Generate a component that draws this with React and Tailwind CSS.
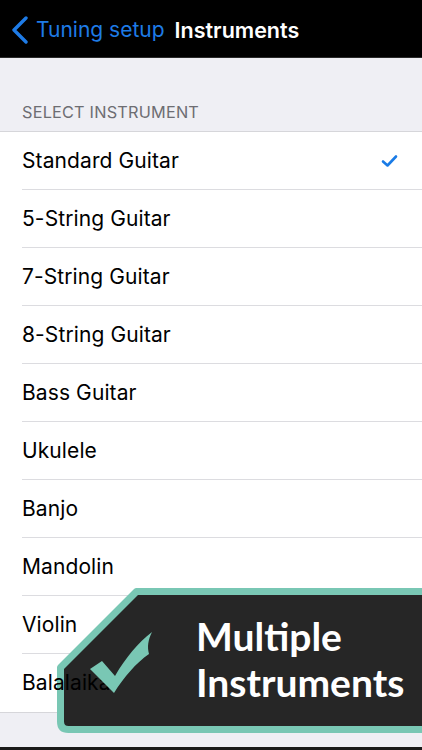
const instruments = [
  "Standard Guitar",
  "5-String Guitar",
  "7-String Guitar",
  "8-String Guitar",
  "Bass Guitar",
  "Ukulele",
  "Banjo",
  "Mandolin",
  "Violin",
  "Balalaika",
];

function Row({ name, selected, last }) {
  return (
    <div className="pl-[22px] bg-white">
      <div
        className={
          "h-[58px] flex items-center pr-[24px] " +
          (last ? "" : "border-b border-[#dcdce0]")
        }
      >
        <span className="relative z-10 text-[21px] text-black tracking-[0.1px]">{name}</span>
        {selected && (
          <svg className="ml-auto" width="17" height="14" viewBox="0 0 17 14">
            <path
              d="M2 7.5 L6.5 11.5 L15 2.5"
              fill="none"
              stroke="#1a7be6"
              strokeWidth="2.6"
              strokeLinecap="round"
              strokeLinejoin="round"
            />
          </svg>
        )}
      </div>
    </div>
  );
}

function Badge() {
  return (
    <div className="absolute left-0 top-[580px] w-[422px] h-[170px]">
      <svg className="absolute inset-0" width="422" height="170" viewBox="0 580 422 170">
        <path
          d="M430 591.5 L136.5 591.5 L60.5 667.5 L60.5 721.5 Q60.5 729.5 68.5 729.5 L430 729.5 Z"
          fill="#262626"
          stroke="#79c7b4"
          strokeWidth="7"
          strokeLinejoin="round"
        />
      </svg>
      <div
        className="absolute left-[196px] top-[33px] text-white font-bold text-[39px] leading-[46px]"
        style={{ fontFamily: "Lato, 'Open Sans', sans-serif" }}
      >
        <div>Multiple</div>
        <div>Instruments</div>
      </div>
      <svg className="absolute inset-0 z-20" width="422" height="170" viewBox="0 580 422 170">
        <path
          d="M90 669 L102 661 L115 676 C126 657 138 643 152 632 C148 640 147 647 149 654 C136 663 124 677 114 693 Z"
          fill="#79c7b4"
        />
      </svg>
    </div>
  );
}

export default function App() {
  return (
    <div
      className="relative w-[422px] h-[750px] overflow-hidden bg-[#efeff4]"
      style={{ fontFamily: "Inter, 'Liberation Sans', sans-serif" }}
    >
      <div className="h-[58px] bg-black flex items-center pt-[3px] border-b border-[#2a2a2a]">
        <svg className="ml-[11px]" width="18" height="28" viewBox="0 0 18 28">
          <path
            d="M15 2 L3 14 L15 26"
            fill="none"
            stroke="#1e7be6"
            strokeWidth="3.4"
            strokeLinecap="round"
            strokeLinejoin="round"
          />
        </svg>
        <span className="ml-[7px] text-[21px] text-[#1e7be6]">Tuning setup</span>
        <span className="ml-[10px] text-[21.5px] font-semibold text-white">Instruments</span>
      </div>

      <div className="h-[73px] flex items-end pl-[22px] pb-[7px]">
        <span className="text-[16.3px] text-[#6d6d72] tracking-[0.2px]">SELECT INSTRUMENT</span>
      </div>

      <div className="border-t border-b border-[#d6d6da]">
        {instruments.map((name, i) => (
          <Row
            key={name}
            name={name}
            selected={i === 0}
            last={i === instruments.length - 1}
          />
        ))}
      </div>

      <div className="absolute left-0 bottom-0 w-full h-[3px] bg-[#1a1a1a]" />

      <Badge />
    </div>
  );
}
